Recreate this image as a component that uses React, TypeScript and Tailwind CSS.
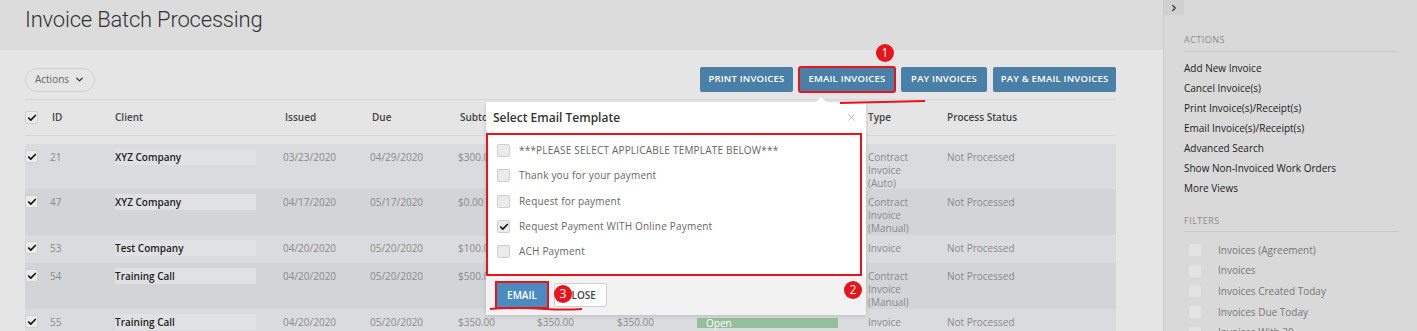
import { Check, ChevronDown, ChevronRight, X } from "lucide-react";

const font = "font-['Open_Sans',sans-serif]";

interface Row {
  id: string;
  client: string;
  issued: string;
  due: string;
  subtotal: string;
  covered: boolean;
  type: string[];
  h: string;
  bg: string;
}

const ROWS: Row[] = [
  { id: "21", client: "XYZ Company", issued: "03/23/2020", due: "04/29/2020", subtotal: "$300.00", covered: true, type: ["Contract", "Invoice", "(Auto)"], h: "h-[45px]", bg: "bg-[#dadbde]" },
  { id: "47", client: "XYZ Company", issued: "04/17/2020", due: "05/17/2020", subtotal: "$0.00", covered: true, type: ["Contract", "Invoice", "(Manual)"], h: "h-[46px]", bg: "bg-[#d3d4d7]" },
  { id: "53", client: "Test Company", issued: "04/20/2020", due: "05/20/2020", subtotal: "$100.00", covered: true, type: ["Invoice"], h: "h-[28px]", bg: "bg-[#dadbde]" },
  { id: "54", client: "Training Call", issued: "04/20/2020", due: "05/20/2020", subtotal: "$500.00", covered: true, type: ["Contract", "Invoice", "(Manual)"], h: "h-[46px]", bg: "bg-[#d3d4d7]" },
  { id: "55", client: "Training Call", issued: "04/20/2020", due: "05/20/2020", subtotal: "$350.00", covered: false, type: ["Invoice"], h: "h-[28px]", bg: "bg-[#dadbde]" },
];

const TEMPLATES = [
  { label: "***PLEASE SELECT APPLICABLE TEMPLATE BELOW***", checked: false },
  { label: "Thank you for your payment", checked: false },
  { label: "Request for payment", checked: false },
  { label: "Request Payment WITH Online Payment", checked: true },
  { label: "ACH Payment", checked: false },
];

const ACTIONS = [
  "Add New Invoice",
  "Cancel Invoice(s)",
  "Print Invoice(s)/Receipt(s)",
  "Email Invoice(s)/Receipt(s)",
  "Advanced Search",
  "Show Non-Invoiced Work Orders",
  "More Views",
];

const FILTERS = ["Invoices (Agreement)", "Invoices", "Invoices Created Today", "Invoices Due Today", "Invoices With 30"];

const cols = "grid grid-cols-[25px_65px_168px_87px_88px_79px_80px_80px_171px_79px_1fr]";

function Badge({ n, className }: { n: string; className: string }) {
  return (
    <div className={`absolute w-[18px] h-[18px] rounded-full bg-[#e8141b] text-white text-[12px] leading-none flex items-center justify-center ${className}`}>
      {n}
    </div>
  );
}

function Box({ checked }: { checked?: boolean }) {
  return (
    <div className="w-[13px] h-[13px] rounded-[2px] border border-[#cfcfcf] bg-[#ebebeb] flex items-center justify-center">
      {checked && <Check className="w-[10px] h-[10px] text-[#111]" strokeWidth={4} />}
    </div>
  );
}

export default function App() {
  return (
    <div className={`flex w-[1417px] h-[331px] overflow-hidden ${font}`}>
      {/* Main */}
      <div className="relative w-[1163px] shrink-0 bg-[#e5e5e5]">
        <div className="h-[50px] bg-[#dcdcdc] px-[25px] pt-[6px]">
          <h1 className="font-['Roboto',sans-serif] font-light text-[22px] leading-[28px] text-[#333] tracking-[-0.2px]">Invoice Batch Processing</h1>
        </div>

        <div className="pl-[25px] pr-[47px]">
          <div className="pt-[17px] flex items-center justify-between">
            <button className="h-[24px] w-[70px] rounded-full border border-[#d0d0d0] flex items-center justify-center gap-[5px] text-[10px] text-[#666]">
              Actions <ChevronDown className="w-[11px] h-[11px] text-[#333]" strokeWidth={3} />
            </button>
            <div className="flex gap-[6px] text-[9.5px] font-semibold text-white tracking-[0.2px]">
              <div className="h-[25px] w-[93px] rounded-[2px] bg-[#4a7fa7] flex items-center justify-center">PRINT INVOICES</div>
              <div className="h-[25px] w-[96px] rounded-[2px] bg-[#4a7fa7] flex items-center justify-center outline-2 outline-[#e8141b] -outline-offset-1">EMAIL INVOICES</div>
              <div className="h-[25px] w-[86px] rounded-[2px] bg-[#4a7fa7] flex items-center justify-center">PAY INVOICES</div>
              <div className="h-[25px] w-[123px] rounded-[2px] bg-[#4a7fa7] flex items-center justify-center">PAY &amp; EMAIL INVOICES</div>
            </div>
          </div>

          <div className="mt-[7px] border-b border-[#d6d6d6]" />

          <div className={`${cols} h-[36px] items-center border-b border-[#d6d6d6] text-[10px] font-semibold text-[#444]`}>
            <Box checked />
            <div className="pl-[2px]">ID</div>
            <div>Client</div>
            <div className="pl-[2px]">Issued</div>
            <div className="pl-[2px]">Due</div>
            <div className="pl-[2px]">Subtotal</div>
            <div />
            <div />
            <div />
            <div>Type</div>
            <div>Process Status</div>
          </div>

          <div className="mt-[8px]">
            {ROWS.map((r) => (
              <div key={r.id} className={`${cols} ${r.h} ${r.bg} pt-[6px] text-[10px] leading-[13px] text-[#8a8a8a]`}>
                <Box checked />
                <div className="pt-[1px]">{r.id}</div>
                <div>
                  <div className="w-[141px] h-[16px] -mt-[1px] bg-[#e0e1e3] text-[#1e1e1e] font-semibold flex items-center">{r.client}</div>
                </div>
                <div className="pt-[1px]">{r.issued}</div>
                <div className="pt-[1px]">{r.due}</div>
                <div className="pt-[1px]">{r.subtotal}</div>
                <div className="pt-[1px]">{r.covered ? "" : r.subtotal}</div>
                <div className="pt-[1px]">{r.covered ? "" : r.subtotal}</div>
                <div className="pt-[3px]">
                  {!r.covered && <div className="w-[141px] h-[10px] bg-[#93c09b] text-white text-[10px] leading-[10px] pl-[9px]">Open</div>}
                </div>
                <div className="pt-[1px]">
                  {r.type.map((t) => (
                    <div key={t}>{t}</div>
                  ))}
                </div>
                <div className="pt-[1px]">Not Processed</div>
              </div>
            ))}
          </div>
        </div>

        {/* Email template popover */}
        <div className="absolute left-[486px] top-[102px] w-[380px] h-[213px] bg-white shadow-[0_1px_4px_rgba(0,0,0,0.15)] flex flex-col">
          <div className="absolute -top-[5px] left-[329px] w-0 h-0 border-l-[6px] border-l-transparent border-r-[6px] border-r-transparent border-b-[6px] border-b-white" />
          <div className="h-[31px] shrink-0 flex items-center justify-between pl-[7px] pr-[9px]">
            <span className="text-[12px] font-semibold text-[#333]">Select Email Template</span>
            <X className="w-[11px] h-[11px] text-[#999]" strokeWidth={1.5} />
          </div>
          <div className="h-[143px] w-[376px] shrink-0 border-2 border-[#e8141b] pl-[9px] pt-[3px] flex flex-col">
            {TEMPLATES.map((t) => (
              <div key={t.label} className="h-[25.3px] flex items-center gap-[9px] text-[10px] text-[#666] tracking-[0.2px]">
                <Box checked={t.checked} />
                {t.label}
              </div>
            ))}
          </div>
          <div className="flex-1 bg-[#f2f2f2] flex items-start gap-[7px] pl-[11px] pt-[7px]">
            <div className="h-[24px] w-[50px] bg-[#4a8bc0] text-white text-[10px] font-semibold flex items-center justify-center outline-2 outline-[#e8141b] outline-offset-0">EMAIL</div>
            <div className="h-[24px] w-[53px] bg-white border border-[#d0d0d0] rounded-[2px] text-[#444] text-[10px] font-semibold flex items-center justify-center">CLOSE</div>
          </div>
        </div>

        {/* annotations */}
        <Badge n="1" className="left-[876px] top-[44px]" />
        <Badge n="2" className="left-[844px] top-[281px]" />
        <Badge n="3" className="left-[554px] top-[285px]" />
        <svg className="absolute left-0 top-0 pointer-events-none" width="1163" height="331">
          <path d="M840 103 Q880 102 925 101" stroke="#e8141b" strokeWidth="2" fill="none" />
          <path d="M490 309 Q520 307 545 309 Q565 310 582 309" stroke="#e8141b" strokeWidth="2" fill="none" />
        </svg>
      </div>

      {/* Sidebar */}
      <div className="relative flex-1 bg-[#d9d9d9] border-l border-[#cdcdcd]">
        <div className="absolute left-0 top-0 w-[20px] h-[15px] bg-[#d0d0d0] flex items-center justify-center">
          <ChevronRight className="w-[10px] h-[10px] text-[#333]" strokeWidth={3} />
        </div>
        <div className="pl-[20px] pr-[19px] pt-[33px]">
          <div className="text-[9px] text-[#8c8c8c] tracking-[0.5px] pb-[4px] border-b border-[#c9c9c9]">ACTIONS</div>
          <div className="pt-[6px] text-[10px] leading-[20px] text-[#222]">
            {ACTIONS.map((a) => (
              <div key={a}>{a}</div>
            ))}
          </div>
          <div className="mt-[16px] text-[9px] text-[#8c8c8c] tracking-[0.5px] pb-[4px] border-b border-[#c9c9c9]">FILTERS</div>
          <div className="pt-[8px] text-[10px] text-[#777]">
            {FILTERS.map((f) => (
              <div key={f} className="h-[20.6px] flex items-center gap-[17px] pl-[5px]">
                <div className="w-[12px] h-[12px] rounded-[2px] bg-[#e3e3e3]" />
                {f}
              </div>
            ))}
          </div>
        </div>
      </div>
    </div>
  );
}
